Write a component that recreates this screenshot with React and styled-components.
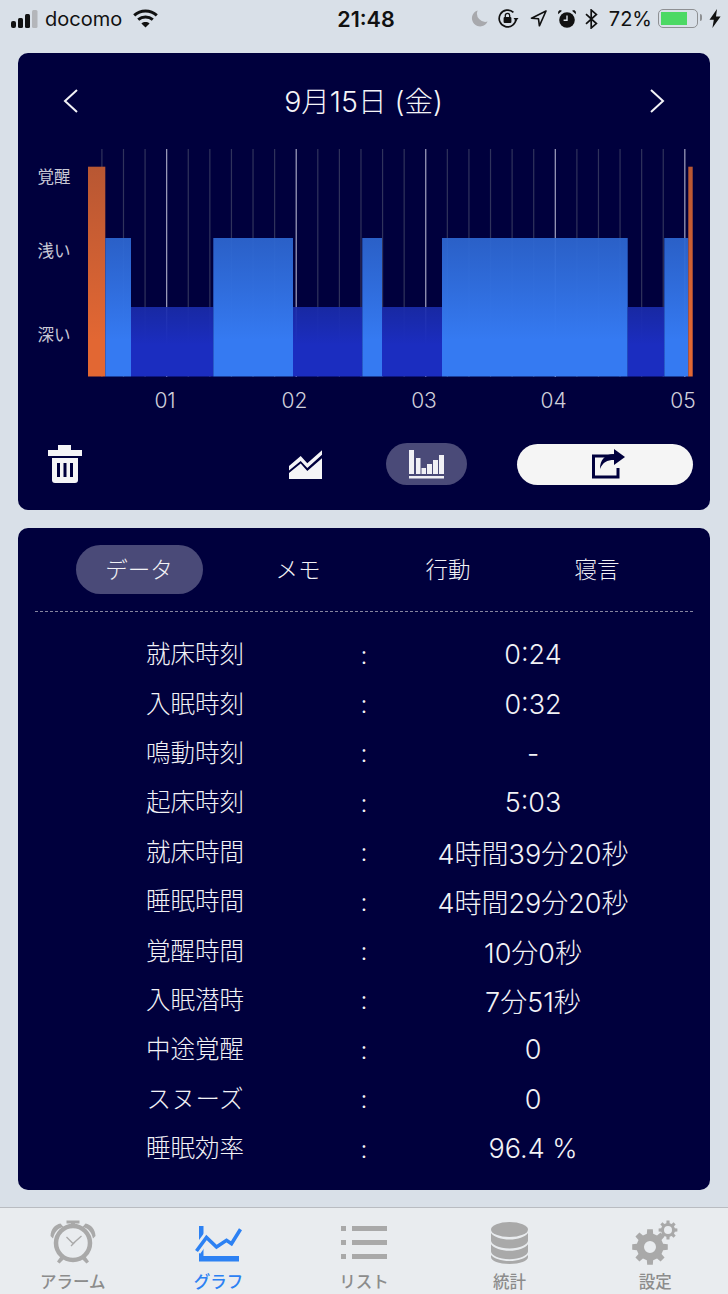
import React from 'react'
import styled, { createGlobalStyle } from 'styled-components'

const navy = '#00003d'
const FONT = `Inter, "Noto Sans CJK JP", sans-serif`

const GlobalStyle = createGlobalStyle`
  html, body {
    margin: 0;
    padding: 0;
    background: #d9e0e8;
    font-family: ${FONT};
  }
`

const SignalIcon = () => (
  <svg width="28" height="18" viewBox="0 0 28 18">
    <rect x="0" y="11" width="5" height="7" rx="2" fill="#111" />
    <rect x="7" y="8" width="5" height="10" rx="1.5" fill="#111" />
    <rect x="14" y="4" width="5" height="14" rx="1.5" fill="#111" />
    <rect x="21" y="0" width="5.5" height="18" rx="1.5" fill="#b4b6ba" />
  </svg>
)

const WifiIcon = () => (
  <svg width="25" height="19" viewBox="0 0 25 19" fill="none" stroke="#111" strokeWidth="3">
    <path d="M1.2 6.4C7.6.6 17.4.6 23.8 6.4" />
    <path d="M5.2 10.6c4.2-3.6 10.4-3.6 14.6 0" />
    <path d="M12.5 18.6 8.4 14.4c2.4-1.9 5.8-1.9 8.2 0z" fill="#111" stroke="none" />
  </svg>
)

const MoonIcon = () => (
  <svg width="17" height="17" viewBox="0 0 17 17">
    <path d="M6.6.4A8.2 8.2 0 1 0 16.6 11.6 8.4 8.4 0 0 1 6.6.4z" fill="#a8a9ad" />
  </svg>
)

const RotationLockIcon = () => (
  <svg width="21" height="19" viewBox="0 0 21 19" fill="none" stroke="#111" strokeWidth="1.7">
    <path d="M18 9.5A8.4 8.4 0 1 1 15.4 3.4" />
    <path d="M15.5 9h5l-2.500 3.300z" fill="#111" stroke="none" />
    <rect x="5.6" y="8" width="7.800" height="6" rx="1" fill="#111" stroke="none" />
    <path d="M7.300 8V6.500a2.200 2.200 0 0 1 4.400 0V8" strokeWidth="1.300" />
  </svg>
)

const LocationIcon = () => (
  <svg width="17" height="17" viewBox="0 0 17 17" fill="none" stroke="#111" strokeWidth="1.600">
    <path d="M16 1 1.500 8.200l7 .6.900 7z" strokeLinejoin="round" />
  </svg>
)

const AlarmIcon = () => (
  <svg width="18" height="18" viewBox="0 0 18 18">
    <circle cx="9" cy="10" r="7.800" fill="#111" />
    <path d="M9 5.500v4.800H5.600" fill="none" stroke="#dde3ea" strokeWidth="1.400" />
    <path d="M.2 4.200 4 .8 1.800.1.100 1.800zM17.800 4.200 14 .8l2.200-.7 1.700 1.700z" fill="#111" />
  </svg>
)

const BluetoothIcon = () => (
  <svg width="13" height="20" viewBox="0 0 13 20" fill="none" stroke="#111" strokeWidth="1.700">
    <path d="M1 5.200 11.400 14.600 6.200 19V1l5.200 4.400L1 14.800" />
  </svg>
)

const BoltIcon = () => (
  <svg width="12" height="19" viewBox="0 0 12 19">
    <path d="M8 0 .5 10.800h4.300L3.400 19 11.600 7.600H7z" fill="#111" />
  </svg>
)

const Chevron = ({ right }) => (
  <svg width="16" height="26" viewBox="0 0 16 26" fill="none" stroke="#f2f2f6" strokeWidth="2">
    <path d={right ? 'M2 2l12 11L2 24' : 'M14 2 2 13l12 11'} />
  </svg>
)

const TrashIcon = () => (
  <svg width="34" height="38" viewBox="0 0 34 38">
    <path d="M10 0h13v5h11v6H0V5h10z" fill="#f5f5f7" />
    <path d="M4 13h26v22a3 3 0 0 1-3 3H7a3 3 0 0 1-3-3z" fill="#f5f5f7" />
    <path d="M9 18h3v14H9zM15.500 18h3v14h-3zM22 18h3v14h-3z" fill={navy} />
  </svg>
)

const AreaIcon = () => (
  <svg width="34" height="29" viewBox="0 0 34 29">
    <path d="M0 16 11.700 6l6.600 7.300L33 .3v4.400L18.300 18l-6.600-7L0 20.500z" fill="#f5f5f7" />
    <path d="M0 23l11.700-9.500 6.600 7.500L33 8.300V29H0z" fill="#f5f5f7" />
  </svg>
)

const BarsIcon = () => (
  <svg width="35" height="29" viewBox="0 0 35 29">
    <path d="M0 0h5v24H0zM7 8h4.500v16H7zM12.500 18H17v6h-4.500zM18 14h5v10h-5zM24 10h5v14h-5zM30 5h5v19h-5z" fill="#f0f0f5" />
    <path d="M0 26h35v2.500H0z" fill="#f0f0f5" />
  </svg>
)

const ShareIcon = () => (
  <svg width="35" height="30" viewBox="0 0 35 30">
    <path d="M22 7H2.500v21h24.500v-9" fill="none" stroke={navy} strokeWidth="3" />
    <path d="M23 0l11 8-11 8v-5c-7 0-11 2-14 9 0-9 5-15 14-15z" fill={navy} />
  </svg>
)

const AlarmTabIcon = ({ color }) => (
  <svg width="48" height="48" viewBox="0 0 48 48">
    <circle cx="24" cy="24" r="17" fill="none" stroke={color} strokeWidth="4.500" />
    <path d="M17.500 1.500h13v3h-4.500V7h-4V4.500h-4.500z" fill={color} />
    <path d="M1.500 17C1.800 10 6 5.500 11.500 4.500l3 3.500C9 9 5.500 13 4 19.500zM46.500 17c-.3-7-4.500-11.500-10-12.500l-3 3.500c5.500 1 9 5 10.500 11.500z" fill={color} />
    <path d="M12 37l-4 5.500 2.500 2L15.500 39.500zM36 37l4 5.500-2.500 2-5-5z" fill={color} />
    <path d="M17.500 18l6.500 6.500 8.500-7.500M22 27l4-4" fill="none" stroke={color} strokeWidth="1.300" />
  </svg>
)

const GraphTabIcon = ({ color }) => (
  <svg width="48" height="40" viewBox="0 -2 48 40">
    <path d="M5 1h4.500v30H45v5.500H5z" fill={color} />
    <path d="M2.500 26 12.500 12.500l10 9.500 10-6.700 5 3.400 9-14.500" fill="none" stroke="#e9ecef" strokeWidth="9" />
    <path d="M2.500 26 12.500 12.500l10 9.500 10-6.700 5 3.400 9-14.500" fill="none" stroke={color} strokeWidth="3.600" />
  </svg>
)

const ListTabIcon = ({ color }) => (
  <svg width="46" height="34" viewBox="0 0 46 34" fill={color}>
    <path d="M0 0h5v5H0zM0 14h5v5H0zM0 28h5v5H0zM11 0h35v5H11zM11 14h35v5H11zM11 28h35v5H11z" />
  </svg>
)

const DatabaseTabIcon = ({ color }) => (
  <svg width="37" height="42" viewBox="0 0 37 42" fill={color}>
    <ellipse cx="18.500" cy="7.500" rx="18.500" ry="7.500" />
    <path d="M0 11c3 4 10 6.500 18.500 6.500S34 15 37 11v7.500c0 4-8 8-18.500 8S0 22.500 0 18.500z" />
    <path d="M0 22.500c3 4 10 6.500 18.500 6.500S34 26.500 37 22.500v7c0 4-8 8-18.500 8S0 33.500 0 29.500z" transform="translate(0 -.2)" />
    <path d="M0 33c3 3.500 10 6 18.500 6S34 36.500 37 33v2c0 4-8 7-18.500 7S0 39 0 35z" />
  </svg>
)

// tooth outline of a gear, closed with the hole cut by evenodd
const gearPath = (cx, cy, outer, inner, hole, teeth) => {
  const step = (Math.PI * 2) / teeth
  const points = []
  for (let i = 0; i < teeth; i++) {
    const a = i * step
    const w = step * 0.2
    const mid = step * 0.3
    points.push([a - mid, inner], [a - w, outer], [a + w, outer], [a + mid, inner])
  }
  const outline = points
    .map(([a, r], i) => `${i ? 'L' : 'M'}${(cx + r * Math.cos(a)).toFixed(2)} ${(cy + r * Math.sin(a)).toFixed(2)}`)
    .join('')
  return `${outline}Z M${cx - hole} ${cy}a${hole} ${hole} 0 1 0 ${hole * 2} 0a${hole} ${hole} 0 1 0 ${-hole * 2} 0Z`
}

const GearsTabIcon = ({ color }) => (
  <svg width="46" height="46" viewBox="0 0 46 46" fill={color} fillRule="evenodd">
    <path d={gearPath(18, 27, 18, 13.500, 6, 8)} />
    <path d={gearPath(36, 10, 9.500, 7, 4, 8)} />
  </svg>
)

const gridLines = Array.from({ length: 28 }, (_, i) => ({ x: 101.9 + 21.59 * i, major: i % 6 === 3 }))

const TOP = { wake: 166.7, light: 238, deep: 307 }
const FILL = { wake: 'url(#wakeFill)', light: 'url(#lightFill)', deep: 'url(#deepFill)' }

const segments = [
  { from: 88, to: 105.3, level: 'wake' },
  { from: 105.3, to: 131, level: 'light' },
  { from: 131, to: 213.3, level: 'deep' },
  { from: 213.3, to: 293, level: 'light' },
  { from: 293, to: 362.3, level: 'deep' },
  { from: 362.3, to: 382, level: 'light' },
  { from: 382, to: 442, level: 'deep' },
  { from: 442, to: 627.7, level: 'light' },
  { from: 627.7, to: 664.3, level: 'deep' },
  { from: 664.3, to: 688.3, level: 'light' },
  { from: 688.3, to: 692.7, level: 'wake' },
]

const SleepChart = () => (
  <svg width="605" height="228" viewBox="88 149 605 228">
    <defs>
      <linearGradient id="wakeFill" gradientUnits="userSpaceOnUse" x1="0" y1="167" x2="0" y2="340">
        <stop offset="0" stopColor="#b85733" />
        <stop offset="1" stopColor="#e26733" />
      </linearGradient>
      <linearGradient id="lightFill" gradientUnits="userSpaceOnUse" x1="0" y1="238" x2="0" y2="340">
        <stop offset="0" stopColor="#2d66d0" stopOpacity="0.94" />
        <stop offset="1" stopColor="#357af2" />
      </linearGradient>
      <linearGradient id="deepFill" gradientUnits="userSpaceOnUse" x1="0" y1="307" x2="0" y2="345">
        <stop offset="0" stopColor="#1a2cac" stopOpacity="0.92" />
        <stop offset="1" stopColor="#1b2dc0" />
      </linearGradient>
    </defs>
    {gridLines.map(({ x, major }) => (
      <rect key={x} x={x - 0.6} y="149" width="1.200" height="228" fill={major ? '#a3a3c0' : '#30335c'} />
    ))}
    {segments.map(({ from, to, level }) => (
      <rect key={from} x={from} y={TOP[level]} width={to - from} height={376.5 - TOP[level]} fill={FILL[level]} />
    ))}
  </svg>
)

const rows = [
  ['就床時刻', '0:24'],
  ['入眠時刻', '0:32'],
  ['鳴動時刻', '-'],
  ['起床時刻', '5:03'],
  ['就床時間', '4時間39分20秒'],
  ['睡眠時間', '4時間29分20秒'],
  ['覚醒時間', '10分0秒'],
  ['入眠潜時', '7分51秒'],
  ['中途覚醒', '0'],
  ['スヌーズ', '0'],
  ['睡眠効率', '96.4 %'],
]

const tabs = [
  { label: 'アラーム', Icon: AlarmTabIcon },
  { label: 'グラフ', Icon: GraphTabIcon, active: true },
  { label: 'リスト', Icon: ListTabIcon },
  { label: '統計', Icon: DatabaseTabIcon },
  { label: '設定', Icon: GearsTabIcon },
]

const App = () => (
  <Page>
    <GlobalStyle />
    <StatusBar>
      <StatusLeft>
        <SignalIcon />
        <Carrier>docomo</Carrier>
        <WifiIcon />
      </StatusLeft>
      <Clock>21:48</Clock>
      <StatusRight>
        <MoonIcon />
        <RotationLockIcon />
        <LocationIcon />
        <AlarmIcon />
        <BluetoothIcon />
        <BatteryText>72%</BatteryText>
        <Battery>
          <BatteryFill />
        </Battery>
        <BoltIcon />
      </StatusRight>
    </StatusBar>

    <Content>
      <ChartCard>
        <DateHeader>
          <Chevron />
          <DateTitle>9月15日 (金)</DateTitle>
          <Chevron right />
        </DateHeader>
        <ChartRow>
          <YAxis>
            <YLabel>覚醒</YLabel>
            <YLabel>浅い</YLabel>
            <YLabel>深い</YLabel>
          </YAxis>
          <SleepChart />
        </ChartRow>
        <XAxis>
          {['01', '02', '03', '04', '05'].map((hour) => (
            <XLabel key={hour}>{hour}</XLabel>
          ))}
        </XAxis>
        <Actions>
          <TrashIcon />
          <AreaIcon />
          <BarsPill>
            <BarsIcon />
          </BarsPill>
          <SharePill>
            <ShareIcon />
          </SharePill>
        </Actions>
      </ChartCard>

      <DataCard>
        <Segments>
          <Segment $active>データ</Segment>
          <Segment>メモ</Segment>
          <Segment>行動</Segment>
          <Segment>寝言</Segment>
        </Segments>
        <Divider />
        {rows.map(([label, value]) => (
          <DataRow key={label}>
            <DataLabel>{label}</DataLabel>
            <span>:</span>
            <DataValue>{value}</DataValue>
          </DataRow>
        ))}
      </DataCard>
    </Content>

    <TabBar>
      {tabs.map(({ label, Icon, active }) => (
        <TabItem key={label} $active={active}>
          <TabIconBox>
            <Icon color={active ? '#2c81f3' : '#a9a9a9'} />
          </TabIconBox>
          <span>{label}</span>
        </TabItem>
      ))}
    </TabBar>
  </Page>
)

export default App

const Page = styled.div`
  width: 728px;
  height: 1294px;
  display: flex;
  flex-direction: column;
  overflow: hidden;
  background: #d9e0e8;
`

const StatusBar = styled.div`
  height: 37px;
  flex: none;
  display: grid;
  grid-template-columns: 1fr auto 1fr;
  align-items: center;
  color: #111;
`

const StatusLeft = styled.div`
  display: flex;
  align-items: center;
  padding-left: 11px;
  gap: 6px;
`

const Carrier = styled.span`
  font-size: 20px;
  margin-right: 5px;
`

const Clock = styled.span`
  font-size: 21.5px;
  font-weight: 600;
  margin-left: 4px;
`

const StatusRight = styled.div`
  display: flex;
  align-items: center;
  justify-content: flex-end;
  padding-right: 7px;
  gap: 11px;

  svg:nth-child(1) {
    margin-right: -1px;
  }

  svg:nth-child(4) {
    margin-right: -2px;
  }
`

const BatteryText = styled.span`
  font-size: 20px;
  margin-right: -5px;
`

const Battery = styled.div`
  position: relative;
  width: 40px;
  height: 19px;
  box-sizing: border-box;
  border: 1.5px solid #8e9093;
  border-radius: 5px;
  padding: 2px;

  &::after {
    content: '';
    position: absolute;
    right: -5px;
    top: 4px;
    width: 2px;
    height: 7px;
    border-radius: 0 2px 2px 0;
    background: #8e9093;
  }
`

const BatteryFill = styled.div`
  width: 26px;
  height: 100%;
  background: #4cd964;
`

const Content = styled.div`
  flex: none;
  padding: 16px 18px 0;
  display: flex;
  flex-direction: column;
  gap: 18px;
`

const ChartCard = styled.section`
  height: 457px;
  border-radius: 10px;
  background: ${navy};
  display: flex;
  flex-direction: column;
`

const DateHeader = styled.div`
  height: 96px;
  flex: none;
  display: flex;
  align-items: center;
  justify-content: space-between;
  padding: 0 45px;
`

const DateTitle = styled.h2`
  margin: 0 0 4px -1px;
  font-size: 28.5px;
  font-weight: 300;
  color: #f4f4f8;
`

const ChartRow = styled.div`
  display: grid;
  grid-template-columns: 70px 605px;
  height: 228px;
`

const YAxis = styled.div`
  display: grid;
  grid-template-rows: 56px 92px 76px;
  justify-items: center;
  align-items: center;
`

const YLabel = styled.span`
  font-size: 16.5px;
  color: #c9c9d6;
  margin: 0 0 2px 2px;
`

const XAxis = styled.div`
  height: 46px;
  flex: none;
  display: flex;
  justify-content: space-between;
  align-items: center;
  padding: 0 2px 0 122px;
`

const XLabel = styled.span`
  width: 50px;
  text-align: center;
  font-size: 21px;
  font-weight: 300;
  color: #cfcfdb;
`

const Actions = styled.div`
  margin-top: 20px;
  padding-left: 30px;
  display: grid;
  grid-template-columns: 241px 97px 131px 176px;
  align-items: center;
  justify-items: start;
  height: 42px;
`

const BarsPill = styled.div`
  width: 81px;
  height: 42px;
  border-radius: 21px;
  background: #4a4a78;
  display: flex;
  align-items: center;
  justify-content: center;
`

const SharePill = styled.div`
  width: 176px;
  height: 41px;
  border-radius: 21px;
  background: #f5f5f5;
  display: flex;
  align-items: center;
  justify-content: center;
  padding-left: 6px;
  box-sizing: border-box;
`

const DataCard = styled.section`
  height: 662px;
  box-sizing: border-box;
  border-radius: 10px;
  background: ${navy};
  padding-top: 17px;
  color: #f2f2f6;
`

const Segments = styled.div`
  display: grid;
  grid-template-columns: 159px 159px 141px 157px;
  padding-left: 41.5px;
`

const Segment = styled.div`
  justify-self: center;
  box-sizing: border-box;
  width: 127px;
  height: 49px;
  padding-bottom: 4px;
  border-radius: 25px;
  background: ${({ $active }) => ($active ? '#4a4a78' : 'transparent')};
  display: flex;
  align-items: center;
  justify-content: center;
  font-size: 22.5px;
  font-weight: 300;
`

const Divider = styled.div`
  margin: 17px 17px 18px;
  border-top: 1px dashed #85859f;
`

const DataRow = styled.div`
  height: 49.4px;
  display: grid;
  grid-template-columns: 198px 140px 198px;
  padding-left: 78px;
  align-items: center;
  justify-items: center;
  font-size: 24.5px;
  font-weight: 300;
`

const DataLabel = styled.span`
  margin-bottom: 4px;
`

const DataValue = styled.span`
  font-size: 27px;
  white-space: nowrap;
`

const TabBar = styled.nav`
  margin-top: 17px;
  flex: 1;
  border-top: 1px solid #b9bcc1;
  background: #e9ecef;
  display: grid;
  grid-template-columns: repeat(5, 1fr);
`

const TabItem = styled.div`
  display: flex;
  flex-direction: column;
  align-items: center;
  font-size: 16.5px;
  font-weight: 500;
  line-height: 20px;
  color: ${({ $active }) => ($active ? '#2c81f3' : '#8c8c8c')};
`

const TabIconBox = styled.div`
  box-sizing: border-box;
  height: 64px;
  padding-top: 6px;
  display: flex;
  align-items: center;
  justify-content: center;
`
